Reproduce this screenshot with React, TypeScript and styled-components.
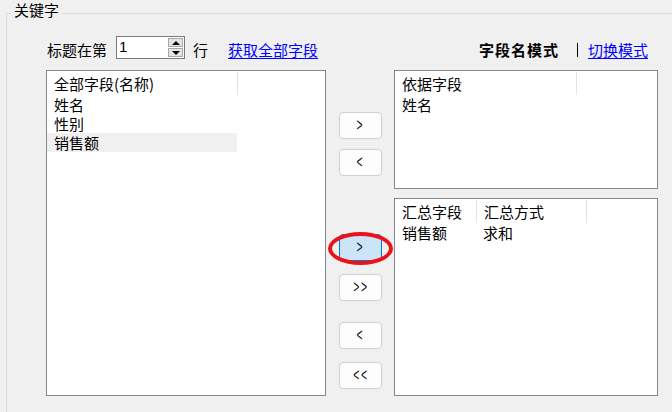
import React from 'react';
import styled, { createGlobalStyle } from 'styled-components';

const Global = createGlobalStyle`
  html, body { margin: 0; padding: 0; background: #f0f0f0; }
  body {
    font-family: "Noto Sans CJK SC", "Noto Sans", sans-serif;
    font-size: 15px;
    color: #000;
  }
`;

const Window = styled.div`
  width: 672px;
  height: 412px;
  overflow: hidden;
  background: #f0f0f0;
  padding-left: 6px;
  box-sizing: border-box;
`;

const Group = styled.fieldset`
  margin: 0;
  padding: 0;
  min-width: 0;
  height: 440px;
  box-sizing: border-box;
  border: 1px solid #dcdcdc;
  border-right: none;
  border-bottom: none;
`;

const Legend = styled.legend`
  margin-left: 4px;
  padding: 0 3px 6px 3px;
  font-size: 15px;
  line-height: 20px;
`;

const Content = styled.div`
  padding: 10px 14px 0 39px;
  display: flex;
  flex-direction: column;
  gap: 11px;
`;

const TopBar = styled.div`
  height: 23px;
  display: flex;
  align-items: center;
  justify-content: space-between;
  padding: 0 10px 0 1px;
`;

const Cluster = styled.div`
  display: flex;
  align-items: center;
`;

const Label = styled.span<{ $ml?: number; $bold?: boolean }>`
  margin-left: ${p => p.$ml ?? 0}px;
  line-height: 20px;
  padding-top: 5px;
  white-space: nowrap;
  font-weight: ${p => (p.$bold ? 700 : 400)};
  letter-spacing: ${p => (p.$bold ? '1px' : '0')};
`;

const Link = styled.a<{ $ml?: number }>`
  margin-left: ${p => p.$ml ?? 0}px;
  line-height: 20px;
  padding-top: 5px;
  color: #0000ff;
  text-decoration: underline;
  text-underline-offset: 2px;
  white-space: nowrap;
  cursor: pointer;
`;

const Spin = styled.div`
  margin-left: 9px;
  width: 69px;
  height: 23px;
  box-sizing: border-box;
  border: 1px solid #7a7a7a;
  background: #fff;
  display: flex;
  align-items: stretch;
`;

const SpinValue = styled.span`
  flex: 1;
  padding-left: 2px;
  font-family: "Liberation Sans", sans-serif;
  font-size: 15px;
  line-height: 19px;
`;

const SpinButtons = styled.div`
  width: 15px;
  margin: 1px 1px 1px 0;
  display: flex;
  flex-direction: column;
  gap: 1px;
`;

const SpinBtn = styled.div<{ $down?: boolean }>`
  flex: 1;
  background: #e5e5e5;
  border: 1px solid #a8a8a8;
  box-sizing: border-box;
  display: flex;
  align-items: center;
  justify-content: center;
  &::after {
    content: '';
    width: 0;
    height: 0;
    border-left: 4px solid transparent;
    border-right: 4px solid transparent;
    ${p => (p.$down ? 'border-top: 4px solid #000;' : 'border-bottom: 4px solid #000;')}
  }
`;

const Divider = styled.span`
  margin-left: 18px;
  width: 1px;
  height: 14px;
  margin-top: 5px;
  background: #000;
`;

const Main = styled.div`
  display: flex;
  height: 326px;
`;

const ListBox = styled.div<{ $w: number; $h: number }>`
  width: ${p => p.$w}px;
  height: ${p => p.$h}px;
  box-sizing: border-box;
  border: 1px solid #828790;
  background: #fff;
  flex: none;
`;

const HeaderRow = styled.div`
  display: flex;
  height: 24px;
  padding-top: 1px;
  box-sizing: border-box;
`;

const HeaderCell = styled.div<{ $w: number }>`
  width: ${p => p.$w}px;
  box-sizing: border-box;
  border-right: 1px solid #e5e5e5;
  padding-left: 7px;
  line-height: 23px;
  white-space: nowrap;
`;

const Row = styled.div<{ $selected?: boolean }>`
  display: flex;
  width: fit-content;
  height: 19px;
  background: ${p => (p.$selected ? '#f0f0f0' : 'transparent')};
`;

const Cell = styled.div<{ $w: number }>`
  width: ${p => p.$w}px;
  box-sizing: border-box;
  padding-left: 7px;
  line-height: 19px;
  white-space: nowrap;
`;

const ButtonColumn = styled.div`
  width: 68px;
  flex: none;
  display: flex;
  flex-direction: column;
  align-items: center;
`;

const ArrowButton = styled.div<{ $mt: number; $active?: boolean }>`
  position: relative;
  margin-top: ${p => p.$mt}px;
  width: 43px;
  height: 27px;
  box-sizing: border-box;
  border: 1px solid ${p => (p.$active ? '#0078d7' : '#d0d0d0')};
  border-radius: 4px;
  background: ${p => (p.$active ? '#cce4f7' : '#fdfdfd')};
  display: flex;
  align-items: center;
  justify-content: center;
  color: #000;
`;

const Chevrons = styled.span`
  display: inline-block;
  font-family: "Liberation Mono", monospace;
  font-size: 12px;
  line-height: 12px;
  letter-spacing: 2px;
  text-indent: 2px;
  transform: scale(0.85, 1.6);
`;

const Annotation = styled.span`
  position: absolute;
  left: -12px;
  top: -3px;
  width: 65px;
  height: 33px;
  box-sizing: border-box;
  border: 4px solid #e8141a;
  border-radius: 50%;
  pointer-events: none;
`;

const RightColumn = styled.div`
  width: 264px;
  flex: none;
  display: flex;
  flex-direction: column;
  gap: 9px;
`;

export default function App() {
  return (
    <>
      <Global />
      <Window>
        <Group>
          <Legend>关键字</Legend>
          <Content>
            <TopBar>
              <Cluster>
                <Label>标题在第</Label>
                <Spin>
                  <SpinValue>1</SpinValue>
                  <SpinButtons>
                    <SpinBtn />
                    <SpinBtn $down />
                  </SpinButtons>
                </Spin>
                <Label $ml={8}>行</Label>
                <Link $ml={20}>获取全部字段</Link>
              </Cluster>
              <Cluster>
                <Label $bold>字段名模式</Label>
                <Divider />
                <Link $ml={10}>切换模式</Link>
              </Cluster>
            </TopBar>
            <Main>
              <ListBox $w={280} $h={326}>
                <HeaderRow>
                  <HeaderCell $w={191}>全部字段(名称)</HeaderCell>
                </HeaderRow>
                <Row><Cell $w={190}>姓名</Cell></Row>
                <Row><Cell $w={190}>性别</Cell></Row>
                <Row $selected><Cell $w={190}>销售额</Cell></Row>
              </ListBox>
              <ButtonColumn>
                <ArrowButton $mt={42}><Chevrons>&gt;</Chevrons></ArrowButton>
                <ArrowButton $mt={10}><Chevrons>&lt;</Chevrons></ArrowButton>
                <ArrowButton $mt={58} $active>
                  <Chevrons>&gt;</Chevrons>
                  <Annotation />
                </ArrowButton>
                <ArrowButton $mt={13}><Chevrons>&gt;&gt;</Chevrons></ArrowButton>
                <ArrowButton $mt={21}><Chevrons>&lt;</Chevrons></ArrowButton>
                <ArrowButton $mt={13}><Chevrons>&lt;&lt;</Chevrons></ArrowButton>
              </ButtonColumn>
              <RightColumn>
                <ListBox $w={264} $h={119}>
                  <HeaderRow>
                    <HeaderCell $w={182}>依据字段</HeaderCell>
                  </HeaderRow>
                  <Row><Cell $w={181}>姓名</Cell></Row>
                </ListBox>
                <ListBox $w={264} $h={198}>
                  <HeaderRow>
                    <HeaderCell $w={82}>汇总字段</HeaderCell>
                    <HeaderCell $w={110}>汇总方式</HeaderCell>
                  </HeaderRow>
                  <Row>
                    <Cell $w={81}>销售额</Cell>
                    <Cell $w={110}>求和</Cell>
                  </Row>
                </ListBox>
              </RightColumn>
            </Main>
          </Content>
        </Group>
      </Window>
    </>
  );
}
